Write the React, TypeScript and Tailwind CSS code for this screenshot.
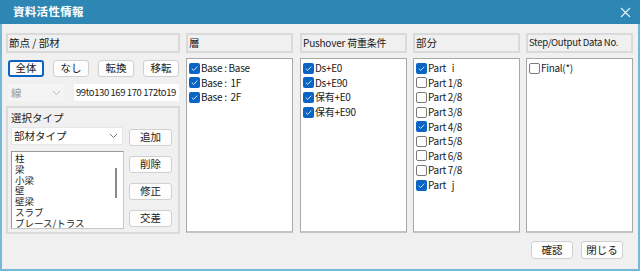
import React from "react";

const FONT = { fontFamily: '"Noto Sans CJK JP", "Noto Sans", sans-serif' };

function Check({ on }: { on: boolean }) {
  return on ? (
    <span className="inline-flex items-center justify-center w-[11px] h-[11px] rounded-[2px] bg-[#0a64c4] shrink-0">
      <svg width="9" height="9" viewBox="0 0 9 9">
        <path d="M1.8 4.6 L3.7 6.4 L7.3 2.6" fill="none" stroke="#cfe3f8" strokeWidth="1" />
      </svg>
    </span>
  ) : (
    <span className="inline-block w-[11px] h-[11px] rounded-[2px] bg-white border border-[#7a7a7a] shrink-0" />
  );
}

function Btn({ children, focus, className = "" }: { children: React.ReactNode; focus?: boolean; className?: string }) {
  return (
    <div
      className={
        "flex items-center justify-center h-[17px] rounded-[3px] bg-[#fdfdfd] text-[10.5px] leading-none text-[#1a1a1a] " +
        (focus ? "border-2 border-[#0a64c4] " : "border border-[#d0d0d0] ") +
        className
      }
    >
      {children}
    </div>
  );
}

function Header({ children, className = "" }: { children: React.ReactNode; className?: string }) {
  return (
    <div
      className={
        "h-[20px] border-2 border-[#dadada] bg-[#f0f0f0] flex items-center pl-[1px] leading-none text-[#1a1a1a] whitespace-nowrap overflow-hidden " +
        className
      }
    >
      {children}
    </div>
  );
}

function CheckList({ items }: { items: [string, boolean][] }) {
  return (
    <div className="mt-[5px] h-[175px] bg-white border border-[#a8a8a8] border-b-2 border-b-[#c4c4c4] pt-[2px] pl-[2px]">
      {items.map(([label, on], i) => (
        <div key={i} className="flex items-center h-[14.6px] text-[10px] text-[#1a1a1a] whitespace-pre">
          <Check on={on} />
          <span className="ml-[1px] leading-none tracking-[-0.3px]">{label}</span>
        </div>
      ))}
    </div>
  );
}

export default function App() {
  return (
    <div className="w-[641px] h-[273px] bg-white" style={FONT}>
      <div className="w-[640px] h-[271px] flex flex-col">
        <div className="h-[24px] bg-[#2e86b4] flex items-center justify-between px-[13px] shrink-0">
          <span className="text-white font-bold text-[11.5px] tracking-[0.3px]">資料活性情報</span>
          <svg width="11" height="11" viewBox="0 0 11 11" className="mr-[-4px]">
            <path d="M1 1 L10 10 M10 1 L1 10" stroke="#e8f2f8" strokeWidth="1.1" />
          </svg>
        </div>
        <div className="flex-1 bg-[#f0f0f0] border-x-2 border-b-2 border-[#74b8da] px-[4px] pt-[9px] flex flex-col">
          <div className="flex">
            {/* left panel */}
            <div className="w-[174px] flex flex-col">
              <Header className="text-[10.5px]">節点 / 部材</Header>
              <div className="flex mt-[7px] pl-[2px] gap-[9px]">
                <Btn focus className="w-[36px]">全体</Btn>
                <Btn className="w-[36px]">なし</Btn>
                <Btn className="w-[36px]">転換</Btn>
                <Btn className="w-[36px]">移転</Btn>
              </div>
              <div className="flex mt-[7px] pl-[2px] items-center">
                <div className="w-[56px] h-[17px] bg-[#f4f4f4] flex items-center justify-between px-[3px] text-[10.5px] text-[#9a9a9a]">
                  <span>線</span>
                  <svg width="9" height="6" viewBox="0 0 9 6">
                    <path d="M1 1 L4.5 4.5 L8 1" fill="none" stroke="#b8b8b8" strokeWidth="1" />
                  </svg>
                </div>
                <div className="ml-[10px] w-[105px] h-[17px] bg-white flex items-center pl-[2px] text-[9.5px] tracking-[-0.4px] text-[#1a1a1a] overflow-hidden whitespace-nowrap">
                  99to130 169 170 172to19
                </div>
              </div>
              <div className="mt-[5px] h-[128px] border-2 border-[#dadada] px-[3px] pt-[2px]">
                <div className="text-[10.5px] text-[#1a1a1a] h-[16px] leading-[16px]">選択タイプ</div>
                <div className="flex items-start mt-[1px]">
                  <div className="w-[112px] h-[18px] bg-white border border-[#e6e6e6] flex items-center justify-between px-[2px] text-[10.5px] text-[#1a1a1a]">
                    <span>部材タイプ</span>
                    <svg width="9" height="6" viewBox="0 0 9 6" className="mr-[2px]">
                      <path d="M1 1 L4.5 4.5 L8 1" fill="none" stroke="#777" strokeWidth="1" />
                    </svg>
                  </div>
                  <Btn className="w-[43px] ml-[6px] mt-[2px]">追加</Btn>
                </div>
                <div className="flex items-start mt-[5px]">
                  <div className="relative w-[113px] h-[78px] bg-white border border-[#9a9a9a] border-r-[#c8c8c8] border-b-[#c8c8c8] pl-[3px] pt-[1px] overflow-hidden">
                    {["柱", "梁", "小梁", "壁", "壁梁", "スラブ", "ブレース/トラス"].map((t) => (
                      <div key={t} className="text-[9.5px] leading-[10.8px] h-[10.8px] text-[#1a1a1a] whitespace-nowrap">
                        {t}
                      </div>
                    ))}
                    <div className="absolute right-[6px] top-[16px] w-[2px] h-[30px] bg-[#8a8a8a]" />
                  </div>
                  <div className="flex flex-col ml-[5px] mt-[5px] gap-[10px]">
                    <Btn className="w-[43px]">削除</Btn>
                    <Btn className="w-[43px]">修正</Btn>
                    <Btn className="w-[43px]">交差</Btn>
                  </div>
                </div>
              </div>
            </div>
            {/* col 2 */}
            <div className="w-[107px] ml-[6px] flex flex-col">
              <Header className="text-[10.5px]">層</Header>
              <CheckList items={[["Base : Base", true], ["Base :  1F", true], ["Base :  2F", true]]} />
            </div>
            <div className="w-[107px] ml-[7px] flex flex-col">
              <Header className="text-[10px] tracking-[-0.2px]">Pushover 荷重条件</Header>
              <CheckList items={[["Ds+E0", true], ["Ds+E90", true], ["保有+E0", true], ["保有+E90", true]]} />
            </div>
            <div className="w-[107px] ml-[6px] flex flex-col">
              <Header className="text-[10.5px]">部分</Header>
              <CheckList
                items={[
                  ["Part   i", true],
                  ["Part 1/8", false],
                  ["Part 2/8", false],
                  ["Part 3/8", false],
                  ["Part 4/8", true],
                  ["Part 5/8", false],
                  ["Part 6/8", false],
                  ["Part 7/8", false],
                  ["Part   j", true],
                ]}
              />
            </div>
            <div className="w-[107px] ml-[6px] flex flex-col">
              <Header className="text-[9.5px] tracking-[-0.3px]">Step/Output Data No.</Header>
              <CheckList items={[["Final(*)", false]]} />
            </div>
          </div>
          <div className="flex justify-end mt-[7px] pr-[11px] gap-[8px]">
            <Btn className="w-[42px] h-[18px]">確認</Btn>
            <Btn className="w-[42px] h-[18px]">閉じる</Btn>
          </div>
        </div>
      </div>
    </div>
  );
}
